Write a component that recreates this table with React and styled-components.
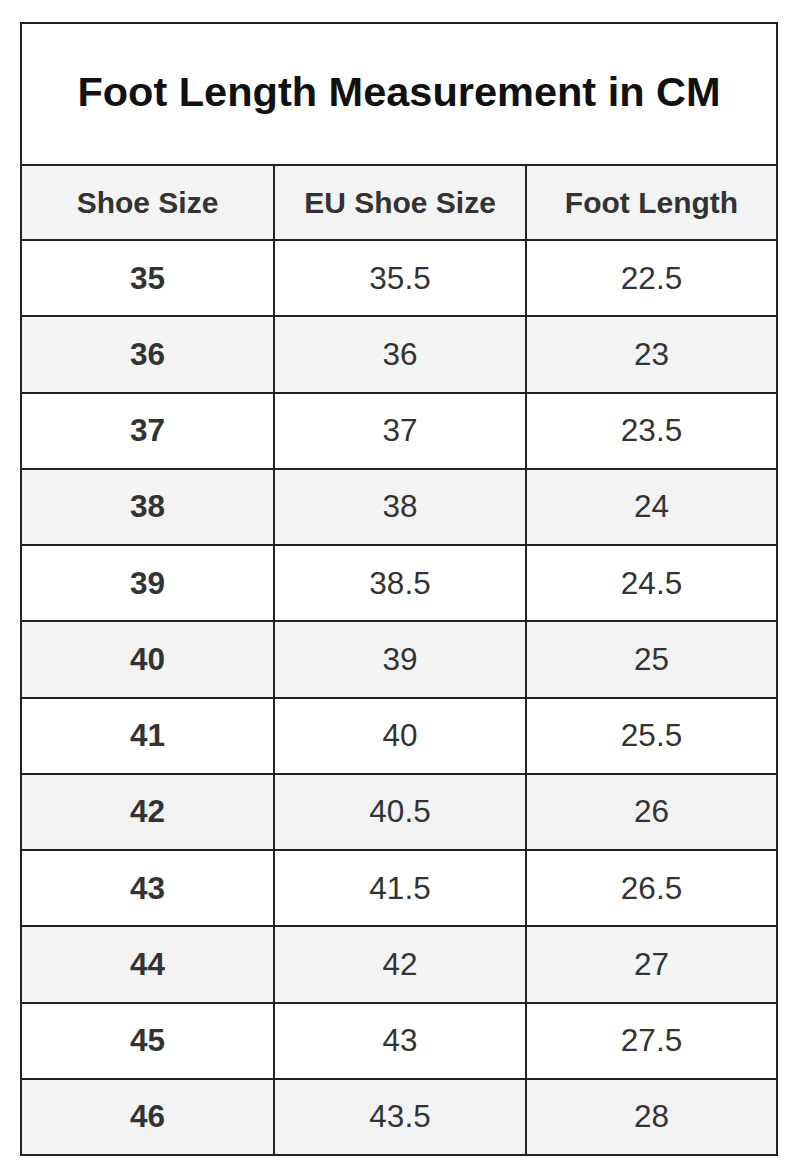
import React from 'react';
import styled, { createGlobalStyle } from 'styled-components';

const rows = [
    ['35', '35.5', '22.5'],
    ['36', '36', '23'],
    ['37', '37', '23.5'],
    ['38', '38', '24'],
    ['39', '38.5', '24.5'],
    ['40', '39', '25'],
    ['41', '40', '25.5'],
    ['42', '40.5', '26'],
    ['43', '41.5', '26.5'],
    ['44', '42', '27'],
    ['45', '43', '27.5'],
    ['46', '43.5', '28'],
];

function App() {
    return (
        <>
            <GlobalStyle />
            <Page>
                <Table>
                    <Title>Foot Length Measurement in CM</Title>
                    <Row $shade $height={75}>
                        <Cell $bold>Shoe Size</Cell>
                        <Cell $bold>EU Shoe Size</Cell>
                        <Cell $bold>Foot Length</Cell>
                    </Row>
                    {rows.map((r, i) => (
                        <Row key={r[0]} $shade={i % 2 === 1} $height={76.25}>
                            <Cell $bold $big>{r[0]}</Cell>
                            <Cell $big>{r[1]}</Cell>
                            <Cell $big>{r[2]}</Cell>
                        </Row>
                    ))}
                </Table>
            </Page>
        </>
    );
}

const GlobalStyle = createGlobalStyle`
    body {
        margin: 0;
        background: #ffffff;
        font-family: "Liberation Sans", Arial, sans-serif;
    }
`;

const Page = styled.div`
    padding: 22px 0 20px 20px;
`;

const Table = styled.div`
    width: 758px;
    box-sizing: border-box;
    border: 2px solid #222222;
    display: flex;
    flex-direction: column;
`;

const Title = styled.div`
    height: 140px;
    box-sizing: border-box;
    padding-bottom: 4px;
    display: flex;
    align-items: center;
    justify-content: center;
    font-size: 41.5px;
    font-weight: 700;
    color: #111111;
`;

const Row = styled.div`
    height: ${(p) => p.$height}px;
    box-sizing: border-box;
    border-top: 2px solid #222222;
    display: grid;
    grid-template-columns: 251px 252px 1fr;
    background: ${(p) => (p.$shade ? '#f3f3f3' : '#ffffff')};
`;

const Cell = styled.div`
    display: flex;
    align-items: center;
    justify-content: center;
    color: #333333;
    font-size: ${(p) => (p.$big ? '31.5px' : '30px')};
    font-weight: ${(p) => (p.$bold ? 700 : 400)};

    & + & {
        border-left: 2px solid #222222;
    }
`;

export default App;
